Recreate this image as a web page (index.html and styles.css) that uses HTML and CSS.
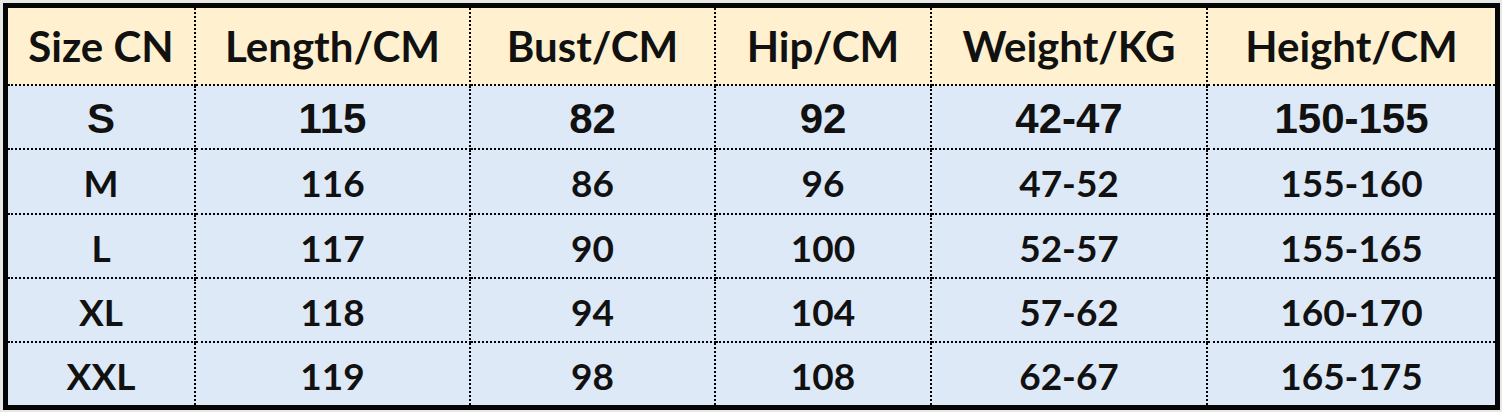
FILE: index.html
```html
<!DOCTYPE html>
<html lang="en">
<head>
<meta charset="utf-8">
<title>Size Chart</title>
<link rel="stylesheet" href="styles.css">
</head>
<body>
<div class="page">
  <div class="chart">
    <div class="cell head">Size CN</div>
    <div class="cell head">Length/CM</div>
    <div class="cell head">Bust/CM</div>
    <div class="cell head">Hip/CM</div>
    <div class="cell head">Weight/KG</div>
    <div class="cell head last-col">Height/CM</div>

    <div class="cell arial">S</div>
    <div class="cell arial">115</div>
    <div class="cell arial">82</div>
    <div class="cell arial">92</div>
    <div class="cell arial">42-47</div>
    <div class="cell arial last-col">150-155</div>

    <div class="cell">M</div>
    <div class="cell">116</div>
    <div class="cell">86</div>
    <div class="cell">96</div>
    <div class="cell">47-52</div>
    <div class="cell last-col">155-160</div>

    <div class="cell">L</div>
    <div class="cell">117</div>
    <div class="cell">90</div>
    <div class="cell">100</div>
    <div class="cell">52-57</div>
    <div class="cell last-col">155-165</div>

    <div class="cell">XL</div>
    <div class="cell">118</div>
    <div class="cell">94</div>
    <div class="cell">104</div>
    <div class="cell">57-62</div>
    <div class="cell last-col">160-170</div>

    <div class="cell last-row">XXL</div>
    <div class="cell last-row">119</div>
    <div class="cell last-row">98</div>
    <div class="cell last-row">108</div>
    <div class="cell last-row">62-67</div>
    <div class="cell last-row last-col">165-175</div>
  </div>
</div>
</body>
</html>
```

FILE: styles.css
```css
html, body {
  margin: 0;
  padding: 0;
  background: #e8e9e6;
}

.page {
  padding: 3px 2px 2px 3px;
}

.chart {
  display: grid;
  grid-template-columns: 188px 275px 245px 216px 276px 287px;
  grid-template-rows: 78px 64px 65px 64px 64px 62px;
  width: 1487px;
  border: 5px solid #050505;
  background: #dde9f6;
  color: #111;
}

.cell {
  box-sizing: border-box;
  display: flex;
  align-items: center;
  justify-content: center;
  border-right: 2px dotted #000;
  border-bottom: 2px dotted #000;
  font-family: Lato, "Liberation Sans", sans-serif;
  font-weight: 700;
  font-size: 37px;
  padding-top: 2px;
}

.head {
  background: #fff1cf;
  font-size: 42px;
  padding-top: 0;
}

.arial {
  font-family: "Liberation Sans", Arial, sans-serif;
  font-size: 42px;
  padding-top: 4px;
}

.last-col {
  border-right: none;
}

.last-row {
  border-bottom: none;
}
```
